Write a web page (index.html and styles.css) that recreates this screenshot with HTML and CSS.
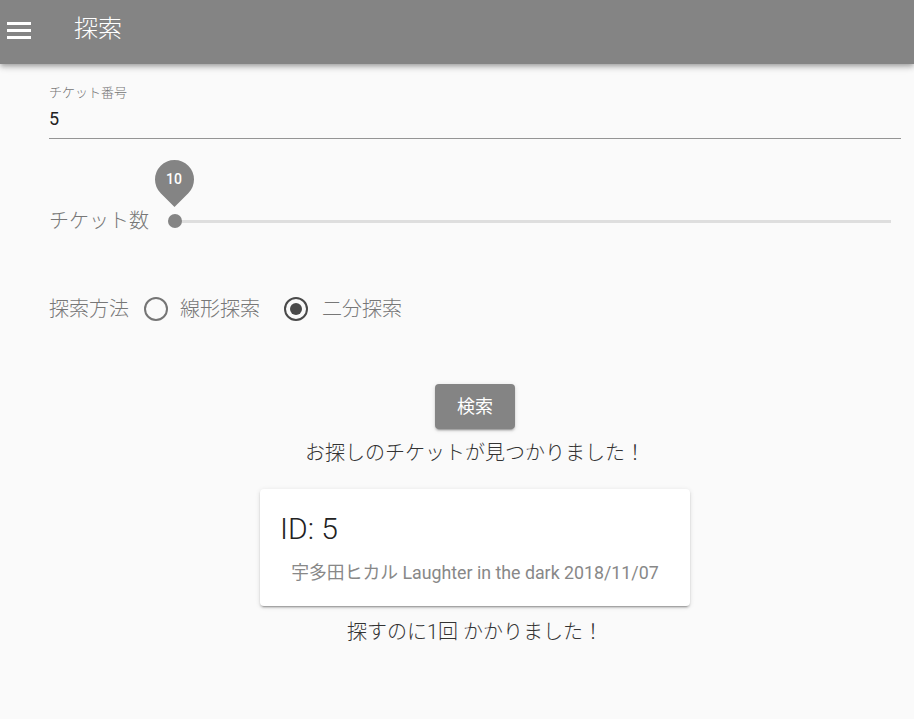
FILE: index.html
```html
<!DOCTYPE html>
<html lang="ja">
<head>
<meta charset="utf-8">
<title>探索</title>
<link rel="stylesheet" href="styles.css">
</head>
<body>
<header class="toolbar">
  <svg class="menu-icon" width="24" height="18" viewBox="0 0 24 18" aria-hidden="true">
    <rect x="0" y="0" width="24" height="3" fill="#fff"/>
    <rect x="0" y="7" width="24" height="3" fill="#fff"/>
    <rect x="0" y="14" width="24" height="3" fill="#fff"/>
  </svg>
  <h1 class="toolbar-title">探索</h1>
</header>
<main class="content">
  <div class="field">
    <div class="field-label">チケット番号</div>
    <div class="field-value">5</div>
  </div>

  <div class="slider-row">
    <span class="row-label">チケット数</span>
    <div class="slider">
      <div class="slider-track"></div>
      <div class="slider-thumb"></div>
      <div class="thumb-label"><span class="thumb-label-text">10</span></div>
    </div>
  </div>

  <div class="radio-row">
    <span class="row-label">探索方法</span>
    <span class="radio"><span class="radio-circle"></span><span class="radio-text">線形探索</span></span>
    <span class="radio radio-checked"><span class="radio-circle"><span class="radio-dot"></span></span><span class="radio-text">二分探索</span></span>
  </div>

  <div class="result">
    <button class="btn">検索</button>
    <p class="message">お探しのチケットが見つかりました！</p>
    <div class="card">
      <div class="card-title">ID: 5</div>
      <div class="card-sub">宇多田ヒカル Laughter in the dark 2018/11/07</div>
    </div>
    <p class="message message-count">探すのに1回 かかりました！</p>
  </div>
</main>
</body>
</html>
```
FILE: styles.css
```css
html, body {
  margin: 0;
  padding: 0;
}
body {
  background: #fafafa;
  font-family: Roboto, "Noto Sans CJK JP", sans-serif;
  color: #333;
  width: 914px;
  height: 719px;
  overflow: hidden;
}
.toolbar {
  height: 64px;
  background: #848484;
  display: flex;
  align-items: center;
  box-shadow: 0 2px 4px -1px rgba(0,0,0,.2), 0 4px 5px 0 rgba(0,0,0,.14), 0 1px 10px 0 rgba(0,0,0,.12);
  position: relative;
  z-index: 2;
}
.menu-icon {
  margin-left: 7px;
  margin-top: -3px;
}
.toolbar-title {
  margin: -6px 0 0 43px;
  font-size: 24px;
  font-weight: 300;
  color: #fff;
  line-height: 30px;
}
.content {
  padding: 0 13px 0 49px;
  display: flex;
  flex-direction: column;
}
.field {
  padding-top: 21px;
  border-bottom: 1px solid #949494;
}
.field-label {
  font-size: 13px;
  line-height: 16px;
  color: #757575;
  font-weight: 300;
}
.field-value {
  margin-top: 6px;
  font-size: 18px;
  line-height: 24px;
  color: #222;
  padding-bottom: 7px;
}
.slider-row {
  margin-top: 62px;
  height: 40px;
  display: flex;
  align-items: center;
}
.row-label {
  font-size: 20px;
  line-height: 26px;
  color: #777;
  font-weight: 300;
}
.slider {
  position: relative;
  flex: 1;
  margin-left: 19px;
  margin-right: 10px;
  height: 40px;
  display: flex;
  align-items: center;
}
.slider-track {
  flex: 1;
  height: 3px;
  background: #dedede;
}
.slider-thumb {
  position: absolute;
  left: 0;
  top: 13px;
  width: 14px;
  height: 14px;
  border-radius: 50%;
  background: #848484;
}
.thumb-label {
  position: absolute;
  left: -14px;
  top: -42px;
  width: 40px;
  height: 40px;
  display: flex;
  align-items: center;
  justify-content: center;
}
.thumb-label::before {
  content: "";
  position: absolute;
  left: 0.5px;
  top: 0.5px;
  width: 39px;
  height: 39px;
  background: #848484;
  border-radius: 50% 50% 0 50%;
  transform: rotate(45deg);
}
.thumb-label-text {
  position: relative;
  color: #fff;
  font-size: 14px;
  font-weight: 500;
}
.radio-row {
  margin-top: 53px;
  display: flex;
  align-items: center;
  height: 30px;
}
.radio {
  display: flex;
  align-items: center;
  margin-left: 15px;
}
.radio-checked {
  margin-left: 24px;
}
.radio-circle {
  width: 24px;
  height: 24px;
  box-sizing: border-box;
  border: 2px solid #757575;
  border-radius: 50%;
  display: flex;
  align-items: center;
  justify-content: center;
}
.radio-checked .radio-circle {
  border-color: #4a4a4a;
}
.radio-dot {
  width: 12px;
  height: 12px;
  border-radius: 50%;
  background: #4a4a4a;
}
.radio-text {
  margin-left: 12px;
  font-size: 20px;
  line-height: 26px;
  color: #777;
  font-weight: 300;
}
.radio-checked .radio-text {
  margin-left: 14px;
}
.result {
  display: flex;
  flex-direction: column;
  align-items: center;
  margin-top: 60px;
}
.btn {
  width: 80px;
  height: 45px;
  border: none;
  border-radius: 4px;
  background: #848484;
  color: #fff;
  font-family: Roboto, "Noto Sans CJK JP", sans-serif;
  font-size: 18px;
  font-weight: 400;
  box-shadow: 0 3px 1px -2px rgba(0,0,0,.2), 0 2px 2px 0 rgba(0,0,0,.14), 0 1px 5px 0 rgba(0,0,0,.12);
  padding: 0 0 3px;
}
.message {
  margin: 11px 0 0;
  font-size: 20px;
  line-height: 26px;
  color: #333;
  font-weight: 300;
}
.card {
  margin-top: 23px;
  width: 430px;
  box-sizing: border-box;
  padding: 22px 20px 22px;
  background: #fff;
  border-radius: 4px;
  box-shadow: 0 3px 1px -2px rgba(0,0,0,.2), 0 2px 2px 0 rgba(0,0,0,.14), 0 1px 5px 0 rgba(0,0,0,.12);
}
.card-title {
  font-size: 30px;
  line-height: 36px;
  color: #222;
  font-weight: 300;
}
.card-sub {
  margin-top: 15px;
  font-size: 17.8px;
  line-height: 22px;
  color: #888;
  text-align: center;
}
.message-count {
  margin-top: 13px;
}
```
